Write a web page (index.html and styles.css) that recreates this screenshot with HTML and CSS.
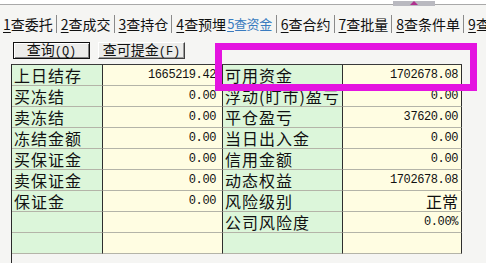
FILE: index.html
```html
<!DOCTYPE html>
<html lang="zh-CN">
<head>
  <meta charset="UTF-8" />
  <title>查资金</title>
  <link rel="stylesheet" href="styles.css">
</head>
<body>
  <div class="topline">
    <div class="thumb"><span class="arrow"></span></div>
  </div>

  <div class="tabs">
    <span class="tab"><u>1</u>查委托</span>
    <span class="tab"><u>2</u>查成交</span>
    <span class="tab"><u>3</u>查持仓</span>
    <span class="tab before-active"><u>4</u>查预埋</span>
    <span class="tab active"><u>5</u>查资金</span>
    <span class="tab"><u>6</u>查合约</span>
    <span class="tab"><u>7</u>查批量</span>
    <span class="tab"><u>8</u>查条件单</span>
    <span class="tab"><u>9</u>查盈</span>
  </div>

  <div class="toolbar">
    <button class="btn btn-default">查询<span class="key">(Q)</span></button>
    <button class="btn">查可提金<span class="key">(F)</span></button>
  </div>

  <div class="panel">
    <table class="funds">
      <tr><td class="lbl">上日结存</td><td class="val">1665219.42</td><td class="lbl">可用资金</td><td class="val">1702678.08</td></tr>
      <tr><td class="lbl">买冻结</td><td class="val">0.00</td><td class="lbl">浮动(盯市)盈亏</td><td class="val">0.00</td></tr>
      <tr><td class="lbl">卖冻结</td><td class="val">0.00</td><td class="lbl">平仓盈亏</td><td class="val">37620.00</td></tr>
      <tr><td class="lbl">冻结金额</td><td class="val">0.00</td><td class="lbl">当日出入金</td><td class="val">0.00</td></tr>
      <tr><td class="lbl">买保证金</td><td class="val">0.00</td><td class="lbl">信用金额</td><td class="val">0.00</td></tr>
      <tr><td class="lbl">卖保证金</td><td class="val">0.00</td><td class="lbl">动态权益</td><td class="val">1702678.08</td></tr>
      <tr><td class="lbl">保证金</td><td class="val">0.00</td><td class="lbl">风险级别</td><td class="val cn">正常</td></tr>
      <tr><td class="lbl"></td><td class="val"></td><td class="lbl">公司风险度</td><td class="val">0.00%</td></tr>
      <tr><td class="lbl"></td><td class="val"></td><td class="lbl"></td><td class="val"></td></tr>
    </table>
  </div>

  <!-- 标注框 -->
  <div class="highlight"></div>
</body>
</html>
```

FILE: styles.css
```css
* {
  box-sizing: border-box;
}

body {
  margin: 0;
  height: 263px;
  overflow: hidden;
  background: #f5f5f3;
  font-family: "Noto Sans CJK SC", sans-serif;
  color: #111;
  display: flex;
  flex-direction: column;
  position: relative;
}

.topline {
  flex-shrink: 0;
  height: 5px;
  background: #fff;
  border-bottom: 1px solid #a9a9a9;
  padding-left: 393px;
}

.thumb {
  width: 42px;
  height: 5px;
  margin-top: 1px;
  background: #b9b9c0;
  display: flex;
  justify-content: center;
}

.arrow {
  width: 0;
  height: 0;
  border-left: 4px solid transparent;
  border-right: 4px solid transparent;
  border-bottom: 4px solid #b0308e;
}

.tabs {
  flex-shrink: 0;
  display: flex;
  height: 31px;
  align-items: center;
  padding-top: 6px;
  margin-left: -1px;
  white-space: nowrap;
  overflow: hidden;
  font-size: 14px;
}

.tab {
  padding: 0 3px 0 4px;
  line-height: 18px;
  border-right: 1px solid #8a8a8a;
}

.tab u {
  text-underline-offset: 2px;
}

.tab.before-active {
  padding-right: 0;
  border-right: none;
}

.tab.active {
  color: #3a7cc0;
  font-size: 13px;
  letter-spacing: -0.4px;
  padding: 0 4px 0 1px;
}

.toolbar {
  flex-shrink: 0;
  display: flex;
  gap: 8px;
  padding: 6px 13px 5px;
}

.btn {
  height: 17px;
  padding: 0;
  font-family: inherit;
  font-size: 14px;
  line-height: 13px;
  color: #111;
  background: #ececea;
  border: 1px solid;
  border-color: #fff #404040 #404040 #fff;
  box-shadow: inset -1px -1px 0 #9a9a9a;
}

.btn-default {
  width: 77px;
  border: 1px solid #111;
  box-shadow: inset 1px 1px 0 #fff, inset -1px -1px 0 #808080;
}

.btn:not(.btn-default) {
  width: 87px;
}

.key {
  font-family: "Liberation Mono", monospace;
  font-size: 12px;
}

.panel {
  flex: 1;
  margin-left: 11px;
  border-left: 1px solid #2a2a2a;
}

.funds {
  border-collapse: separate;
  border-spacing: 0;
  border-top: 1px solid #3a3a3a;
  table-layout: fixed;
}

.funds tr {
  height: 21px;
}

.funds td {
  padding: 0;
  line-height: 19px;
  border-right: 1px solid #2e2e2e;
  border-bottom: 1px solid #b4b4a8;
  white-space: nowrap;
}

.lbl {
  background: #dcf6da;
  font-size: 16px;
  letter-spacing: 1px;
  padding-left: 2px !important;
}

.val {
  background: #fffde2;
  text-align: right;
  font-family: "Liberation Mono", monospace;
  font-size: 12px;
  letter-spacing: -0.4px;
  padding-right: 3px !important;
}

.funds td:nth-child(2) {
  padding-right: 6px !important;
}

.val.cn {
  font-family: "Noto Sans CJK SC", sans-serif;
  font-size: 16px;
  letter-spacing: 0;
}

.funds td:nth-child(1) { width: 91px; }
.funds td:nth-child(2) { width: 120px; }
.funds td:nth-child(3) { width: 120px; }
.funds td:nth-child(4) { width: 119px; }

.highlight {
  position: absolute;
  left: 215px;
  top: 43px;
  width: 262px;
  height: 48px;
  border: 7px solid #e414e0;
}
```
